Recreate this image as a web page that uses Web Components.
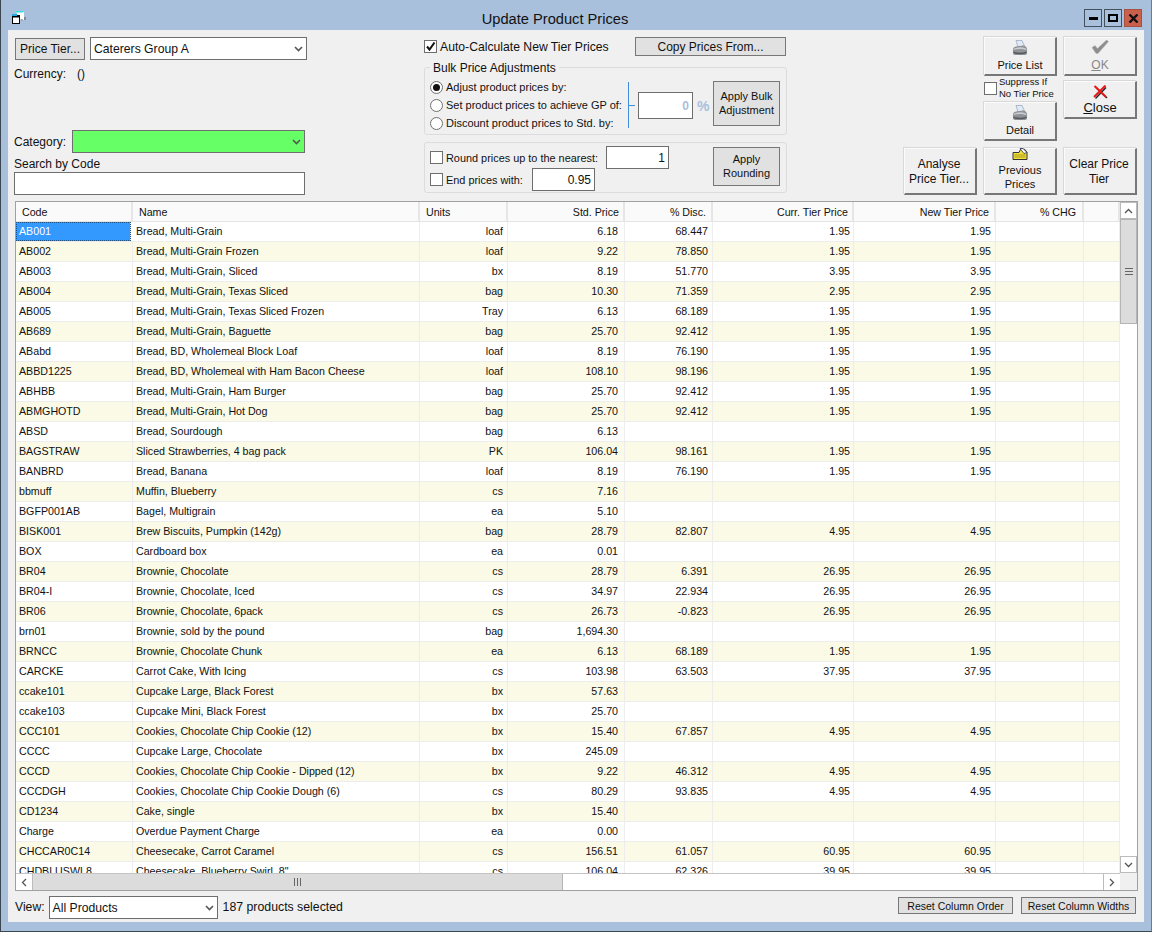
<!doctype html>
<html><head><meta charset="utf-8"><style>
html,body{margin:0;padding:0;height:100%;background:#a8c0dc}
body{font:12px "Liberation Sans",sans-serif;color:#111;overflow:hidden}
</style></head><body>
<app-window title="Update Product Prices">
<price-header></price-header>
<product-grid></product-grid>
<grid-footer></grid-footer>
</app-window>
<script>
const F='"Liberation Sans",Arial,sans-serif';
function def(name,css,html){customElements.define(name,class extends HTMLElement{connectedCallback(){if(this.shadowRoot)return;const r=this.attachShadow({mode:'open'});r.innerHTML='<style>'+css+'</style>'+(typeof html==='function'?html(this):html)}})}
const CH='<svg width="9" height="6" viewBox="0 0 9 6"><path d="M1 1l3.500 3.500L8 1" fill="none" stroke="#555" stroke-width="1.600"/></svg>';
const PRN='<svg width="16" height="16" viewBox="0 0 16 16" style="flex:none"><path d="M4 .5L10 .5 12.500 6 6 7z" fill="#dfeaf6" stroke="#8ea3ba" stroke-width=".7"/><path d="M1 9.500Q1 7 4 6.500L11 5.500Q15 6 15 9.500V13Q15 15 12 15H4Q1 15 1 13z" fill="#8f9296"/><path d="M2 8.500Q8 6 14 8.500V10Q8 8 2 10z" fill="#c9ccd0"/><path d="M1.500 11.500Q8 14 14.500 11.500V13Q8 15.500 1.500 13z" fill="#55585c"/></svg>';

def('app-window',`:host{display:flex;flex-direction:column;width:1152px;height:932px;box-sizing:border-box;border-left:1px solid #3b4650;border-right:1px solid #6d7c8c;border-bottom:1px solid #3b4650;background:#a8c0dc;font-family:${F}}
.bar{height:30px;display:flex;align-items:center;position:relative;flex:none;padding:0 9px 0 10px}
.title{position:absolute;left:0;right:42px;text-align:center;font-size:14.670px;color:#111;top:10px;line-height:18px}
.ic{position:relative;margin-top:6px}
.btns{margin-left:auto;display:flex;gap:2px;position:relative;top:3px}
.b{width:18px;height:18px;border:1px solid #44505c;display:grid;place-items:center;box-sizing:border-box}
.x{background:#c9604c;border-color:#a8503f}
.main{flex:1;margin:0 7px 9px 7px;background:#f0f0f0;display:flex;flex-direction:column;min-height:0}`,
(el)=>`<div class="bar"><svg class="ic" width="16" height="14" viewBox="0 0 16 14"><path d="M5 1h8v8h-3z" fill="#fff"/><rect x="5" y="0" width="7" height="1.500" fill="#3dd"/><rect x="1.500" y="4.500" width="7" height="8" fill="#fff" stroke="#000"/><rect x="1" y="3" width="5" height="2" fill="#2ad"/><rect x="2" y="5" width="6" height="1.500" fill="#000"/><rect x="13" y="6" width="2" height="3" fill="#888"/><rect x="10" y="8" width="2" height="2" fill="#aaa"/></svg><div class="title">${el.getAttribute('title')}</div>
<div class="btns"><div class="b"><svg width="9" height="3"><rect width="9" height="3" fill="#000"/></svg></div><div class="b"><svg width="10" height="8"><rect x="1" y="1" width="8" height="6" fill="none" stroke="#000" stroke-width="2"/></svg></div><div class="b x"><svg width="11" height="9" viewBox="0 0 11 9"><path d="M1.500 .5l8 8M9.500 .5l-8 8" stroke="#111" stroke-width="2.400"/></svg></div></div></div><div class="main"><slot></slot></div>`);

def('win-button',`:host{display:inline-flex;box-sizing:border-box;background:#e1e1e1;border:1px solid #777;align-items:center;justify-content:center;text-align:center;font:12px/14px ${F};color:#111;flex:none}
:host([raised]){background:#f0f0f0;border:1px solid #fbfbfb;border-right:2px solid #777;border-bottom:2px solid #777;box-shadow:-1px -1px 0 #d8d8d8;flex-direction:column}
:host([disabled]){color:#888}`,'<slot></slot>');

def('win-select',`:host{display:flex;box-sizing:border-box;border:1px solid #6e6e6e;background:var(--bg,#fff);align-items:center;padding:0 3px 0 3px;font:12.200px ${F};color:#111;justify-content:space-between;height:23px;flex:none}`,'<span><slot></slot></span>'+CH);

def('win-input',`:host{display:flex;box-sizing:border-box;border:1px solid #6e6e6e;background:#fff;align-items:center;justify-content:flex-end;padding:0 3px;font:12px ${F};color:#111;flex:none}`,'<slot></slot>');

def('win-check',`:host{display:inline-flex;align-items:center;gap:3px;font:10.900px ${F};color:#111;white-space:nowrap}
.b{width:11px;height:11px;border:1px solid #6e6e6e;background:#fff;display:block;flex:none}
svg{display:block}`,(el)=>`<span class="b">${el.hasAttribute('checked')?'<svg width="11" height="11" viewBox="0 0 11 11"><path d="M2 5.500l2.500 3L9.500 1.500" fill="none" stroke="#111" stroke-width="2"/></svg>':''}</span><span><slot></slot></span>`);

def('win-radio',`:host{display:flex;align-items:center;gap:3px;font:11px ${F};color:#111;white-space:nowrap;height:18px}
.r{width:11px;height:11px;border:1px solid #707070;border-radius:50%;background:#fff;display:grid;place-items:center;flex:none}
i{width:7px;height:7px;border-radius:50%;background:#111;display:block}`,(el)=>`<span class="r">${el.hasAttribute('checked')?'<i></i>':''}</span><span><slot></slot></span>`);

def('price-header',`:host{display:block;height:171px;flex:none;font:12px ${F};box-sizing:border-box}
.wrap{display:grid;grid-template-columns:416px 363px 1fr;height:100%}
.left{padding:7px 0 0 6px;display:flex;flex-direction:column}
.row{display:flex;align-items:center}
.cur{display:flex;gap:11px;margin-top:6px;height:15px;align-items:center}
.cat{display:flex;align-items:center;margin-top:49px;justify-content:space-between;width:291px}
.mid{padding-top:7px;display:flex;flex-direction:column}
.top{display:flex;align-items:center;height:19px}
fieldset{margin:5px 0 0;border:1px solid #dcdcdc;border-radius:3px;padding:4px 6px 0 5px;min-width:0}
legend{margin-left:0;padding:0 3px;font-size:12px;line-height:15px;height:13px;color:#111}
.bulk{width:363px;height:74px;box-sizing:border-box;display:flex;align-items:flex-start}
.radios{width:198px;flex:none}
.group{width:10px;height:46px;margin-top:4px;border-left:1px solid #3f8fd8;position:relative;box-sizing:border-box;flex:none}
.group:after{content:"";position:absolute;left:0;top:23px;width:6px;border-top:1px solid #3f8fd8}
.pct{margin:14px 0 0;display:flex;align-items:center;gap:4px;color:#a9bfdc;font-size:14px}
.round{margin-top:7px;width:363px;height:51px;box-sizing:border-box;border:1px solid #dcdcdc;border-radius:3px;display:flex;justify-content:space-between;padding:3px 6px 0 5px}
.rl{display:flex;flex-direction:column}
.r1,.r2{display:flex;align-items:center;justify-content:space-between}
.r1{width:239px}.r2{width:165px;margin-top:-1px}
.right{display:grid;grid-template-columns:73px 73px 73px;column-gap:7px;align-content:start;justify-content:end;padding:7px 7px 0 0}
.stack{display:flex;flex-direction:column}
.sup{display:flex;align-items:center;gap:2px;height:26px;padding-bottom:2px;box-sizing:border-box;font-size:9.500px;line-height:12px;color:#111}
.sup .b{width:11px;height:11px;border:1px solid #6e6e6e;background:#fff;flex:none}
u{text-decoration:underline}`,
`<div class="wrap"><div class="left">
<div class="row"><win-button style="width:70px;height:22px;margin-left:1px">Price Tier...</win-button><win-select style="width:217px;margin-left:5px">Caterers Group A</win-select></div>
<div class="cur"><span>Currency:</span><span>()</span></div>
<div class="cat"><span>Category:</span><win-select style="width:233px;--bg:#66ff66"></win-select></div>
<div style="margin-top:4px;line-height:15px">Search by Code</div>
<win-input style="width:291px;height:23px"></win-input>
</div>
<div class="mid">
<div class="top"><win-check checked style="font-size:12.200px">Auto-Calculate New Tier Prices</win-check><win-button style="width:151px;height:19px;margin-left:auto;margin-right:1px">Copy Prices From...</win-button></div>
<fieldset class="bulk"><legend>Bulk Price Adjustments</legend>
<div class="radios"><win-radio checked>Adjust product prices by:</win-radio><win-radio>Set product prices to achieve GP of:</win-radio><win-radio>Discount product prices to Std. by:</win-radio></div>
<div class="group"></div>
<div class="pct"><win-input style="width:55px;height:27px;color:#a9bfdc;font-weight:700">0</win-input><b>%</b></div>
<win-button style="margin:3px 0 0 auto;width:67px;height:45px;font-size:11px;padding-bottom:2px">Apply Bulk<br>Adjustment</win-button>
</fieldset>
<div class="round">
<div class="rl"><div class="r1"><win-check>Round prices up to the nearest:</win-check><win-input style="width:63px;height:23px">1</win-input></div>
<div class="r2"><win-check>End prices with:</win-check><win-input style="width:63px;height:23px">0.95</win-input></div></div>
<win-button style="margin-top:1px;width:67px;height:39px;font-size:11px;padding-bottom:2px">Apply<br>Rounding</win-button>
</div>
</div>
<div class="right">
<div></div>
<div class="stack"><win-button raised style="height:39px">${PRN}<span style="margin-top:2px;font-size:11px">Price List</span></win-button>
<div class="sup"><span class="b"></span><span>Suppress If<br>No Tier Price</span></div>
<win-button raised style="height:39px">${PRN}<span style="margin-top:2px;font-size:11px">Detail</span></win-button></div>
<div class="stack"><win-button raised disabled style="height:39px"><svg width="18" height="14" viewBox="0 0 18 14"><path d="M1 7.500L4 5.500 6.500 8.500 15.500 0 17.500 1.500 7 13.500H5z" fill="#8d8d8d" stroke="#b8b8b8" stroke-width=".6"/></svg><span style="margin-top:4px"><u>O</u>K</span></win-button>
<win-button raised style="height:38px;margin-top:5px"><svg width="15" height="14" viewBox="0 0 15 14" style="flex:none"><path d="M2.500 2L14 13M13 2.500L2.500 13.500" stroke="#222" stroke-width="1.400"/><path d="M1.500 1L13 12M12.500 .5L1 12" stroke="#e81818" stroke-width="2"/></svg><span style="margin-top:2px;font-size:13px"><u>C</u>lose</span></win-button></div>
<win-button raised style="height:47px;margin-top:7px;line-height:15px;padding:2px 2px 0 0;grid-row:2;grid-column:1">Analyse<br>Price Tier...</win-button>
<win-button raised style="height:47px;margin-top:7px;padding-bottom:3px;grid-row:2;grid-column:2"><svg width="16" height="12" viewBox="0 0 16 12" style="flex:none"><path d="M1 4.500h6l2-4 4 1 2 3v7H1z" fill="#f1df3a" stroke="#333"/><path d="M2.500 7h11M2.500 9h11" stroke="#a8981a"/><path d="M8 .5l3 0 4 4-3 1z" fill="#fff" stroke="#335" stroke-width=".8"/></svg><span style="line-height:14px;font-size:11px;margin-top:3px">Previous<br>Prices</span></win-button>
<win-button raised style="height:47px;margin-top:7px;line-height:15px;padding:2px 2px 0 0;grid-row:2;grid-column:3">Clear Price<br>Tier</win-button>
</div></div>`);

const DATA=`AB001|Bread, Multi-Grain|loaf|6.18|68.447|1.95|1.95
AB002|Bread, Multi-Grain Frozen|loaf|9.22|78.850|1.95|1.95
AB003|Bread, Multi-Grain, Sliced|bx|8.19|51.770|3.95|3.95
AB004|Bread, Multi-Grain, Texas Sliced|bag|10.30|71.359|2.95|2.95
AB005|Bread, Multi-Grain, Texas Sliced Frozen|Tray|6.13|68.189|1.95|1.95
AB689|Bread, Multi-Grain, Baguette|bag|25.70|92.412|1.95|1.95
ABabd|Bread, BD, Wholemeal Block Loaf|loaf|8.19|76.190|1.95|1.95
ABBD1225|Bread, BD, Wholemeal with Ham Bacon Cheese|loaf|108.10|98.196|1.95|1.95
ABHBB|Bread, Multi-Grain, Ham Burger|bag|25.70|92.412|1.95|1.95
ABMGHOTD|Bread, Multi-Grain, Hot Dog|bag|25.70|92.412|1.95|1.95
ABSD|Bread, Sourdough|bag|6.13|||
BAGSTRAW|Sliced Strawberries, 4 bag pack|PK|106.04|98.161|1.95|1.95
BANBRD|Bread, Banana|loaf|8.19|76.190|1.95|1.95
bbmuff|Muffin, Blueberry|cs|7.16|||
BGFP001AB|Bagel, Multigrain|ea|5.10|||
BISK001|Brew Biscuits, Pumpkin (142g)|bag|28.79|82.807|4.95|4.95
BOX|Cardboard box|ea|0.01|||
BR04|Brownie, Chocolate|cs|28.79|6.391|26.95|26.95
BR04-I|Brownie, Chocolate, Iced|cs|34.97|22.934|26.95|26.95
BR06|Brownie, Chocolate, 6pack|cs|26.73|-0.823|26.95|26.95
brn01|Brownie, sold by the pound|bag|1,694.30|||
BRNCC|Brownie, Chocolate Chunk|ea|6.13|68.189|1.95|1.95
CARCKE|Carrot Cake, With Icing|cs|103.98|63.503|37.95|37.95
ccake101|Cupcake Large, Black Forest|bx|57.63|||
ccake103|Cupcake Mini, Black Forest|bx|25.70|||
CCC101|Cookies, Chocolate Chip Cookie (12)|bx|15.40|67.857|4.95|4.95
CCCC|Cupcake Large, Chocolate|bx|245.09|||
CCCD|Cookies, Chocolate Chip Cookie - Dipped (12)|bx|9.22|46.312|4.95|4.95
CCCDGH|Cookies, Chocolate Chip Cookie Dough (6)|cs|80.29|93.835|4.95|4.95
CD1234|Cake, single|bx|15.40|||
Charge|Overdue Payment Charge|ea|0.00|||
CHCCAR0C14|Cheesecake, Carrot Caramel|cs|156.51|61.057|60.95|60.95
CHDBLUSWL8|Cheesecake, Blueberry Swirl, 8"|cs|106.04|62.326|39.95|39.95`.split('\n').map(s=>s.split('|'));
const HEAD=[['Code','l'],['Name','l'],['Units','l'],['Std. Price','r'],['% Disc.','r'],['Curr. Tier Price','r'],['New Tier Price','r'],['% CHG','r'],['','r']];

def('product-grid',`:host{display:block;flex:none;margin:0 6px 0 7px;height:690px;box-sizing:border-box;border:1px solid #a0a0a0;position:relative;background:#fff;overflow:hidden;font:10.670px ${F};color:#111}
.scroll{position:absolute;left:0;top:0;right:17px;bottom:17px;overflow:hidden}
.hd,.rw{display:grid;grid-template-columns:var(--cols)}
.hd{height:20px;background:#fafafa;border-bottom:1px solid #e4e4e4;box-sizing:border-box}
.hd div{box-sizing:border-box;border-right:2px solid #e6e6e6;padding:0 4px 0 6px;line-height:21px;white-space:nowrap;overflow:hidden}
.hd .r{padding:0 5px}
.hd div:nth-child(4),.hd div:nth-child(6){padding-right:4px}
.hd div:nth-child(8){padding-right:6px}
.rw{height:20px;box-sizing:border-box;border-bottom:1px solid #ededed}
.rw.a{background:#fbfae6}
.rw div{box-sizing:border-box;border-right:1px solid #ededed;padding:0 3px;line-height:19px;white-space:nowrap;overflow:hidden}
.rw div.sel{background:#3399ff;color:#fff;outline:1px dotted #1a4f85;outline-offset:-1px;width:115px}
.r{text-align:right}
.rw .c3{padding-right:4px}.rw .c4{padding-right:6px}.rw .c5{padding-right:4px}.rw .c6{padding-right:3px}.rw .c7{padding-right:4px}
.vb{position:absolute;right:0;top:0;bottom:17px;width:17px;background:#fff;box-sizing:border-box;display:flex;flex-direction:column}
.sb{height:17px;background:#fff;border:1px solid #bbb;box-sizing:border-box;display:grid;place-items:center;flex:none}
.thumb{height:105px;background:#dcdcdc;border:1px solid #b4b4b4;box-sizing:border-box;display:grid;place-items:center;flex:none}
.fill{flex:1;background:#fff}
.hb{position:absolute;left:0;right:17px;bottom:0;height:17px;background:#fff;border-top:1px solid #c4c4c4;box-sizing:border-box;display:flex}
.hb .sb{width:17px;height:16px;border-width:0 1px 0 0}
.hb .ht{width:530px;background:#dcdcdc;border-right:1px solid #b4b4b4;display:grid;place-items:center;box-sizing:border-box}
.hb .end{margin-left:auto;border-width:0 0 0 1px}
.corner{position:absolute;right:0;bottom:0;width:17px;height:17px;background:#f0f0f0}`,
`<div class="scroll" style="--cols:117px 287px 88px 117px 88px 141px 142px 88px 1fr">
<div class="hd">${HEAD.map(h=>`<div class="${h[1]}">${h[0]}</div>`).join('')}</div>
${DATA.map((d,i)=>`<div class="rw ${i%2?'a':''}"><div class="${i?'':'sel'}">${d[0]}</div><div>${d[1]}</div><div class="r c3">${d[2]}</div><div class="r c4">${d[3]}</div><div class="r c5">${d[4]}</div><div class="r c6">${d[5]}</div><div class="r c7">${d[6]}</div><div></div><div></div></div>`).join('')}
</div>
<div class="vb"><div class="sb"><svg width="9" height="6" viewBox="0 0 9 6"><path d="M1 5l3.500-3.500L8 5" fill="none" stroke="#555" stroke-width="1.300"/></svg></div><div class="thumb"><svg width="8" height="7"><path d="M0 .5h8M0 3.500h8M0 6.500h8" stroke="#666"/></svg></div><div class="fill"></div><div class="sb"><svg width="9" height="6" viewBox="0 0 9 6"><path d="M1 1l3.500 3.500L8 1" fill="none" stroke="#555" stroke-width="1.300"/></svg></div></div>
<div class="hb"><div class="sb"><svg width="6" height="9" viewBox="0 0 6 9"><path d="M5 1L1.500 4.500 5 8" fill="none" stroke="#555" stroke-width="1.300"/></svg></div><div class="ht"><svg width="7" height="8"><path d="M.5 0v8M3.500 0v8M6.500 0v8" stroke="#666"/></svg></div><div class="sb end"><svg width="6" height="9" viewBox="0 0 6 9"><path d="M1 1l3.500 3.500L1 8" fill="none" stroke="#555" stroke-width="1.300"/></svg></div></div>
<div class="corner"></div>`);

def('grid-footer',`:host{display:flex;align-items:flex-start;flex:1;padding:5px 8px 0 7px;font:12.200px ${F};color:#111;min-height:0}
span{line-height:23px}
.sp{margin:1px 0 0 auto;display:flex;gap:8px}`,
`<span>View:</span><win-select style="width:169px;margin-left:4px">All Products</win-select><span style="margin-left:5px;font-size:12.300px">187 products selected</span><div class="sp"><win-button style="width:115px;height:17px;font-size:10.500px">Reset Column Order</win-button><win-button style="width:115px;height:17px;font-size:10.500px">Reset Column Widths</win-button></div>`);
</script></body></html>
